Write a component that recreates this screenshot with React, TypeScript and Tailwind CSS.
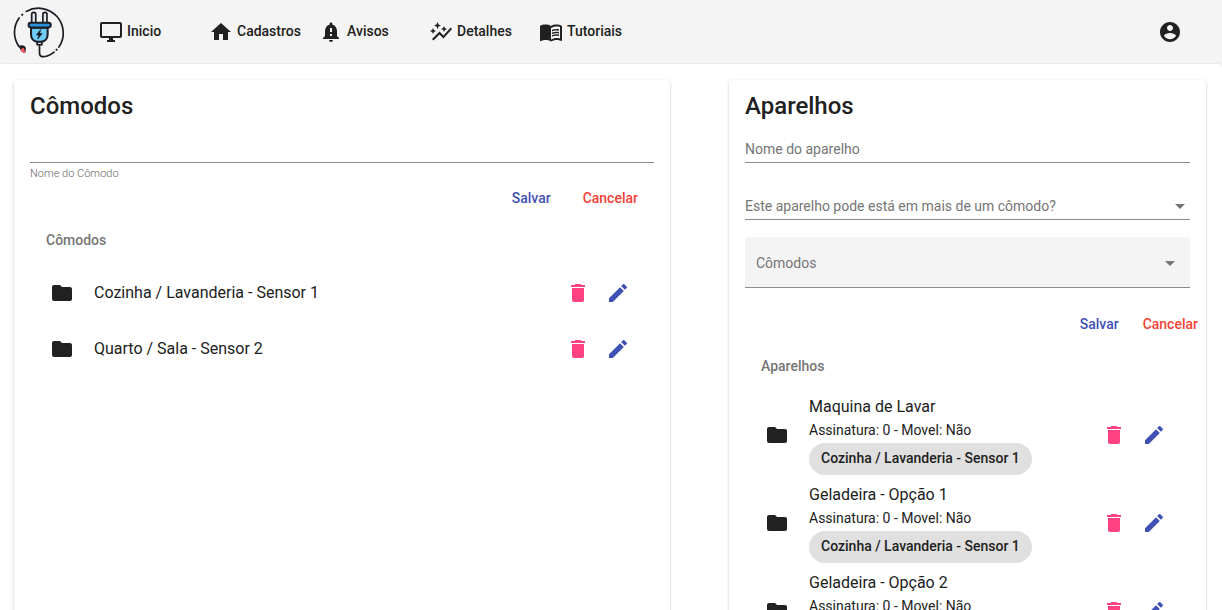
import type { ReactNode } from "react";
import {
  MdAutoGraph,
  MdDelete,
  MdEdit,
  MdFolder,
  MdHome,
  MdMenuBook,
  MdNotificationImportant,
  MdOutlineDesktopWindows,
} from "react-icons/md";

const navItems = [
  { label: "Inicio", Icon: MdOutlineDesktopWindows },
  { label: "Cadastros", Icon: MdHome },
  { label: "Avisos", Icon: MdNotificationImportant },
  { label: "Detalhes", Icon: MdAutoGraph },
  { label: "Tutoriais", Icon: MdMenuBook },
];

const rooms = ["Cozinha / Lavanderia - Sensor 1", "Quarto / Sala - Sensor 2"];

const devices = [
  { name: "Maquina de Lavar", room: rooms[0] },
  { name: "Geladeira - Opção 1", room: rooms[0] },
  { name: "Geladeira - Opção 2", room: rooms[0] },
];

function Logo() {
  return (
    <svg viewBox="39 18 156 156" className="size-[53px]" fill="none" stroke="#1c1c24" strokeWidth="6" strokeLinecap="round" aria-hidden="true">
      <path d="M78 34A73 73 0 0 1 174 139" strokeWidth="5" />
      <path d="M57 53A73 73 0 0 0 57 138" strokeWidth="5" />
      <path d="M66 44l.5-.5M167 147l.5-.5" />
      <path d="M56 136c6-5 20-3 21 6l-2 14c-8 1-15-5-17-17z" fill="#1c1c24" stroke="none" />
      <path d="M61 145l10-4 4 15c-8 0-12-5-14-11z" fill="#ff5a5f" stroke="none" />
      <path d="M94 66V43a6 6 0 0 1 12 0v23M127 66V43a6 6 0 0 1 12 0v23" fill="#e8edf2" strokeWidth="5" />
      <path d="M92 82h49v20c0 13-9 21-20 21h-9c-11 0-20-8-20-21z" fill="#6fcbf8" />
      <rect x="85" y="67" width="65" height="14" rx="6" fill="#2793dd" />
      <path d="M110 124h14v8h-14z" fill="#c9d2da" strokeWidth="5" />
      <path d="M117 133v23c0 14 13 12 23 9 8-2 14-6 20-11" strokeWidth="5" />
      <path d="M120 88l-12 15h7l-3 12 13-16h-7z" fill="#1c1c24" strokeWidth="2" />
    </svg>
  );
}

function Caret({ className }: { className: string }) {
  return (
    <svg viewBox="0 0 10 5" className={`pointer-events-none absolute h-[5px] w-[10px] fill-[#757575] ${className}`} aria-hidden="true">
      <path d="M0 0h10L5 5z" />
    </svg>
  );
}

function Card({ title, children }: { title: string; children: ReactNode }) {
  return (
    <section className="min-h-[720px] rounded bg-white px-4 pt-[10px] shadow-[0_1px_3px_rgba(0,0,0,0.24)]">
      <h2 className="mb-3 text-2xl font-medium">{title}</h2>
      {children}
    </section>
  );
}

function RowActions({ name }: { name: string }) {
  return (
    <div className="flex">
      <button type="button" aria-label={`Excluir ${name}`} className="grid size-10 place-items-center text-[#ff4081]">
        <MdDelete size={24} />
      </button>
      <button type="button" aria-label={`Editar ${name}`} className="grid size-10 place-items-center text-[#3f51b5]">
        <MdEdit size={24} />
      </button>
    </div>
  );
}

export default function App() {
  return (
    <div className="flex h-screen flex-col overflow-hidden bg-[#f4f4f4] font-[Roboto,sans-serif] text-sm text-[#212121]">
      <header className="flex h-16 shrink-0 items-center pl-[13px] pr-10">
        <a href="#inicio" aria-label="Página inicial">
          <Logo />
        </a>
        <nav className="ml-[33px] flex flex-1">
          {navItems.map(({ label, Icon }) => (
            <a key={label} href={`#${label.toLowerCase()}`} className="flex w-[110px] items-center gap-1 font-medium">
              <Icon size={24} className="shrink-0" />
              <span className="pb-0.5">{label}</span>
            </a>
          ))}
        </nav>
        <button type="button" aria-label="Conta">
          <svg viewBox="0 0 24 24" className="size-6 fill-current" aria-hidden="true">
            <path d="M12 2C6.48 2 2 6.48 2 12s4.48 10 10 10 10-4.480 10-10S17.520 2 12 2zm0 3c1.660 0 3 1.340 3 3s-1.340 3-3 3-3-1.340-3-3 1.340-3 3-3zm0 14.200c-2.500 0-4.710-1.280-6-3.220.030-1.990 4-3.080 6-3.080 1.990 0 5.970 1.090 6 3.080-1.290 1.940-3.500 3.220-6 3.220z" />
          </svg>
        </button>
      </header>

      <main className="grid min-h-0 flex-1 grid-cols-[656fr_477fr] items-start gap-[59px] overflow-hidden rounded-tr bg-white pl-[14px] pr-4 pt-4 shadow-[0_0_2px_rgba(0,0,0,0.16)]">
        <Card title="Cômodos">
          <div className="flex flex-col">
            <input id="room-name" className="order-1 h-[29px] border-b border-[#8c8c8c] bg-transparent pt-0.5 outline-none" />
            <label htmlFor="room-name" className="order-2 pt-1 text-[11px] font-light leading-[14px] text-[#666]">
              Nome do Cômodo
            </label>
          </div>
          <div className="flex h-[34px] justify-end font-medium">
            <button type="button" className="px-4 text-[#3f51b5]">Salvar</button>
            <button type="button" className="px-4 text-[#f44336]">Cancelar</button>
          </div>
          <h3 className="flex h-[50px] items-center px-4 font-medium text-[#757575]">Cômodos</h3>
          <ul>
            {rooms.map((room) => (
              <li key={room} className="flex h-14 items-center px-4">
                <MdFolder size={24} className="mx-1 shrink-0" />
                <span className="flex-1 pl-4 text-base">{room}</span>
                <RowActions name={room} />
              </li>
            ))}
          </ul>
        </Card>

        <Card title="Aparelhos">
          <input
            aria-label="Nome do aparelho"
            placeholder="Nome do aparelho"
            className="block h-[29px] w-full border-b border-[#8c8c8c] bg-transparent pt-0.5 outline-none placeholder:text-[#757575]"
          />
          <div className="relative mt-7">
            <select
              aria-label="Este aparelho pode está em mais de um cômodo?"
              defaultValue=""
              className="block h-[29px] w-full appearance-none border-b border-[#8c8c8c] bg-transparent pt-0.5 text-[#757575] outline-none"
            >
              <option value="">Este aparelho pode está em mais de um cômodo?</option>
              <option value="sim">Sim</option>
              <option value="nao">Não</option>
            </select>
            <Caret className="right-[5px] top-[13px]" />
          </div>
          <div className="relative mt-[17px]">
            <select
              aria-label="Cômodos"
              defaultValue=""
              className="block h-[51px] w-full appearance-none rounded-t border-b border-[#8c8c8c] bg-[#f4f4f4] px-[11px] pt-0.5 text-[#757575] outline-none"
            >
              <option value="">Cômodos</option>
              {rooms.map((room) => (
                <option key={room}>{room}</option>
              ))}
            </select>
            <Caret className="right-[15px] top-6" />
          </div>
          <div className="-mr-4 mt-[19px] flex h-[34px] justify-end gap-2 font-medium">
            <button type="button" className="px-2 text-[#3f51b5]">Salvar</button>
            <button type="button" className="px-2 text-[#f44336]">Cancelar</button>
          </div>
          <h3 className="flex h-[50px] items-center px-4 font-medium text-[#757575]">Aparelhos</h3>
          <ul>
            {devices.map(({ name, room }) => (
              <li key={name} className="flex items-center px-4 py-1">
                <MdFolder size={24} className="mx-1 shrink-0" />
                <div className="flex-1 pl-4">
                  <p className="text-base">{name}</p>
                  <p className="leading-[22px]">Assinatura: 0 - Movel: Não</p>
                  <span className="mt-0.5 flex h-8 w-fit items-center rounded-full bg-[#e0e0e0] px-3 pb-0.5 font-medium">{room}</span>
                </div>
                <RowActions name={name} />
              </li>
            ))}
          </ul>
        </Card>
      </main>
    </div>
  );
}
